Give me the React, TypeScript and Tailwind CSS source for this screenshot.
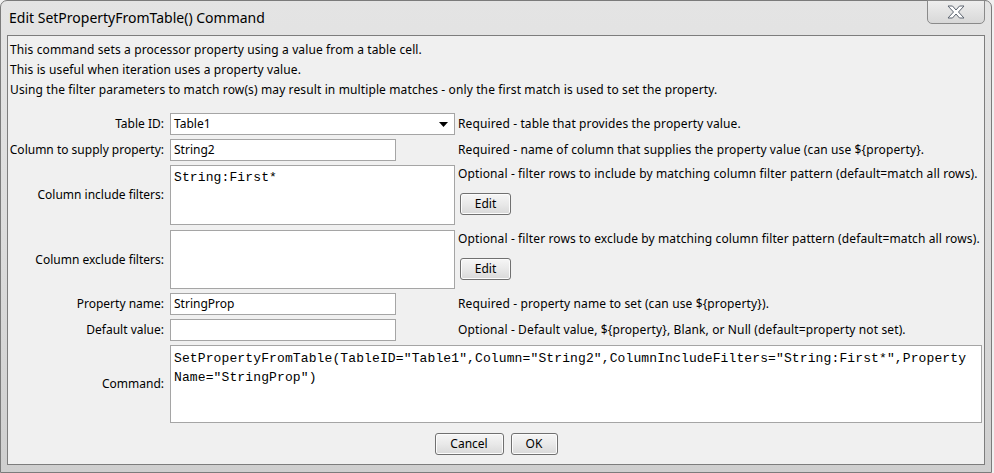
const ui = { fontFamily: '"Noto Sans", "Liberation Sans", sans-serif' }
const txt = { letterSpacing: '0.12px' }
const mono = { fontFamily: '"Liberation Mono", "Courier New", monospace', letterSpacing: '0.12px' }

function Label({ text }: { text: string }) {
  return <div className="w-[157px] shrink-0 text-right pr-[1px]">{text}</div>
}

function Btn({ children, w }: { children: string; w: string }) {
  return (
    <button
      className={`${w} h-[22px] rounded-[3px] border border-[#707070] bg-gradient-to-b from-[#f6f6f6] via-[#e9e9e9] to-[#d9d9d9] text-[12px] text-black shadow-[inset_0_0_0_1px_#fcfcfc] flex items-center justify-center`}
      style={ui}
    >
      {children}
    </button>
  )
}

export default function App() {
  return (
    <div className="w-[994px] h-[473px] overflow-hidden bg-[#f0f0f0]">
      <div className="w-[992px] h-[473px] rounded-t-[7px] border border-[#7b7b7b] bg-gradient-to-b from-[#e4e4e4] via-[#dcdcdc] to-[#cfcfcf] flex flex-col">
        {/* title bar */}
        <div className="h-[34px] flex items-start justify-between shrink-0">
          <div className="pl-[8px] pt-[7px] text-[14px] leading-[20px] text-black" style={{ fontFamily: '"Noto Sans", "Open Sans", sans-serif' }}>
            Edit SetPropertyFromTable() Command
          </div>
          <div className="mr-[6px] mt-[-1px] w-[58px] h-[24px] rounded-b-[5px] border border-[#8a8a8a] bg-gradient-to-b from-[#eeeeee] to-[#d8d8d8] flex items-center justify-center">
            <svg width="20" height="14" viewBox="0 0 20 14">
              <path
                d="M2 1 H6.5 L10 5 L13.5 1 H18 L12.5 7 L18 13 H13.5 L10 9 L6.5 13 H2 L7.5 7 Z"
                fill="#ffffff"
                stroke="#5c6470"
                strokeWidth="1"
                strokeLinejoin="round"
              />
            </svg>
          </div>
        </div>

        {/* content panel */}
        <div className="ml-[6px] mr-[6px] h-[430px] border border-[#7d7d7d] bg-[#f0f0f0] text-[12px] text-black flex flex-col" style={ui}>
          <div className="pl-[2px] pt-[4px] leading-[20px]" style={txt}>
            <div>This command sets a processor property using a value from a table cell.</div>
            <div>This is useful when iteration uses a property value.</div>
            <div>Using the filter parameters to match row(s) may result in multiple matches - only the first match is used to set the property.</div>
          </div>

          {/* Table ID */}
          <div className="mt-[13px] h-[22px] flex items-center">
            <Label text="Table ID:" />
            <div className="ml-[5px] w-[285px] h-[22px] border border-[#a5a5a5] bg-white flex items-center justify-between pl-[3px] pr-[6px]">
              <span>Table1</span>
              <svg width="9" height="5" viewBox="0 0 9 5">
                <path d="M0 0 H9 L4.5 5 Z" fill="#000" />
              </svg>
            </div>
            <div className="ml-[3px]" style={txt}>Required - table that provides the property value.</div>
          </div>

          {/* Column to supply */}
          <div className="mt-[4px] h-[22px] flex items-center">
            <Label text="Column to supply property:" />
            <div className="ml-[5px] w-[285px]">
              <div className="w-[226px] h-[22px] border border-[#a5a5a5] bg-white flex items-center pl-[3px]">String2</div>
            </div>
            <div className="ml-[3px]" style={txt}>Required - name of column that supplies the property value (can use ${'{'}property{'}'}.</div>
          </div>

          {/* include filters */}
          <div className="mt-[4px] h-[60px] flex">
            <div className="self-center"><Label text="Column include filters:" /></div>
            <div className="ml-[5px] w-[285px] h-[60px] border border-[#a5a5a5] bg-white pl-[3px] pt-[2px] leading-[19px] text-[13px]" style={mono}>
              String:First*
            </div>
            <div className="ml-[3px] flex flex-col items-start">
              <div className="leading-[18px]" style={txt}>Optional - filter rows to include by matching column filter pattern (default=match all rows).</div>
              <div className="mt-[10px] ml-[2px]"><Btn w="w-[51px]">Edit</Btn></div>
            </div>
          </div>

          {/* exclude filters */}
          <div className="mt-[5px] h-[59px] flex">
            <div className="self-center"><Label text="Column exclude filters:" /></div>
            <div className="ml-[5px] w-[285px] h-[59px] border border-[#a5a5a5] bg-white"></div>
            <div className="ml-[3px] flex flex-col items-start">
              <div className="leading-[18px]" style={txt}>Optional - filter rows to exclude by matching column filter pattern (default=match all rows).</div>
              <div className="mt-[10px] ml-[2px]"><Btn w="w-[51px]">Edit</Btn></div>
            </div>
          </div>

          {/* Property name */}
          <div className="mt-[4px] h-[22px] flex items-center">
            <Label text="Property name:" />
            <div className="ml-[5px] w-[285px]">
              <div className="w-[226px] h-[22px] border border-[#a5a5a5] bg-white flex items-center pl-[3px]">StringProp</div>
            </div>
            <div className="ml-[3px]" style={txt}>Required - property name to set (can use ${'{'}property{'}'}).</div>
          </div>

          {/* Default value */}
          <div className="mt-[4px] h-[22px] flex items-center">
            <Label text="Default value:" />
            <div className="ml-[5px] w-[285px]">
              <div className="w-[226px] h-[22px] border border-[#a5a5a5] bg-white"></div>
            </div>
            <div className="ml-[3px]" style={txt}>Optional - Default value, ${'{'}property{'}'}, Blank, or Null (default=property not set).</div>
          </div>

          {/* Command */}
          <div className="mt-[4px] h-[78px] flex">
            <div className="self-center"><Label text="Command:" /></div>
            <div className="ml-[5px] w-[812px] h-[78px] border border-[#a5a5a5] bg-white pl-[3px] pt-[3px] leading-[19px] text-[13px] whitespace-pre" style={mono}>
              <div>SetPropertyFromTable(TableID="Table1",Column="String2",ColumnIncludeFilters="String:First*",Property</div>
              <div>Name="StringProp")</div>
            </div>
          </div>

          {/* buttons */}
          <div className="mt-[10px] flex justify-center gap-[7px]">
            <Btn w="w-[69px]">Cancel</Btn>
            <Btn w="w-[47px]">OK</Btn>
          </div>
        </div>
      </div>
    </div>
  )
}
